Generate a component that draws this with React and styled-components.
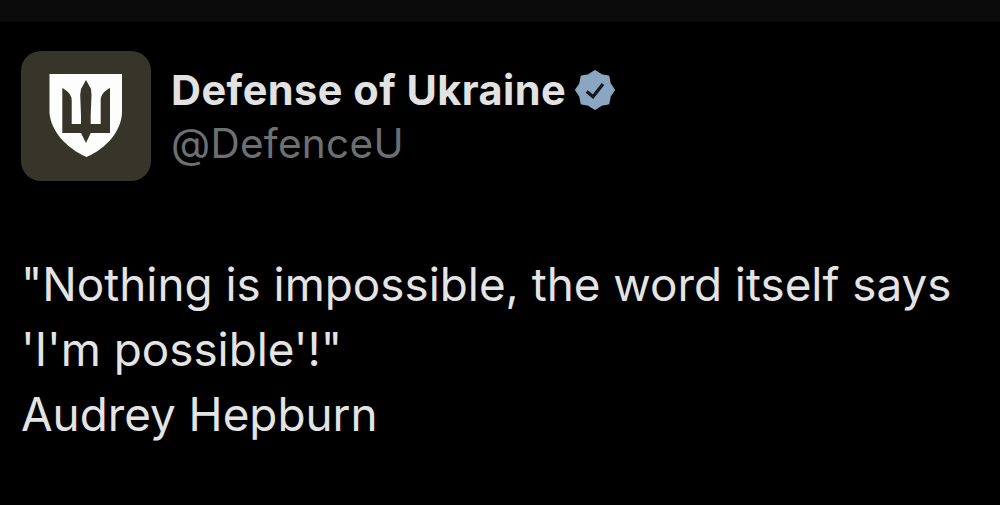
import React from "react";
import styled, { createGlobalStyle } from "styled-components";

const Global = createGlobalStyle`
html,body{margin:0;padding:0;background:#000;}
`;

const Page = styled.div`
width:1000px;
height:505px;
overflow:hidden;
background:#000;
font-family:Inter,"Liberation Sans",sans-serif;
`;

const TopBar = styled.div`
height:22px;
background:#0b0b0b;
`;

const Tweet = styled.div`
padding:29px 0 0 21px;
`;

const Header = styled.div`
display:flex;
align-items:flex-start;
gap:20px;
`;

const Avatar = styled.div`
width:130px;
height:130px;
border-radius:20px;
background:#37342a;
`;

const Names = styled.div`
display:flex;
flex-direction:column;
padding-top:13px;
`;

const NameRow = styled.div`
display:flex;
align-items:center;
gap:9px;
height:52px;
`;

const Name = styled.span`
font-size:41.5px;
font-weight:700;
letter-spacing:0.45px;
color:#e2e2e2;
`;

const Handle = styled.span`
margin-top:2px;
font-size:40.5px;
line-height:52px;
letter-spacing:0.3px;
color:#6d7073;
`;

const Body = styled.p`
margin:71px 0 0;
font-size:45.8px;
line-height:65px;
color:#e4e4e4;
white-space:pre-line;
`;

const Emblem = () => (
  <svg width="130" height="130" viewBox="0 0 130 130">
    <path fill="#fdfdfc" d="M28.5 23H101V62C100 80 86 97 65.5 106C45 97 30 80 28.5 62Z" />
    <path
      fill="#37342a"
      fillRule="evenodd"
      d="M65 29L70 38L70.5 44L69.7 64V73H79.7V49C79.7 43 85 39 89 37V82H69.7L65 92L60 82H41.3V37C45 39 50.7 43 50.7 49V73H60V64L59.2 44L60 38Z"
    />
  </svg>
);

const Verified = () => (
  <svg width="40" height="40" viewBox="0 0 40 40">
    <path
      fill="#8aa6c1"
      stroke="#8aa6c1"
      strokeWidth="2"
      strokeLinejoin="round"
      d="M20 1L26.3 5.2L33.4 6.6L34.8 13.7L39 20L34.8 26.3L33.4 33.4L26.3 34.8L20 39L13.7 34.8L6.6 33.4L5.2 26.3L1 20L5.2 13.7L6.6 6.6L13.7 5.2Z"
    />
    <path fill="none" stroke="#101820" strokeWidth="3.3" d="M11.7 21.5L18 26.7L28 14" />
  </svg>
);

export default function App() {
  return (
    <Page>
      <Global />
      <TopBar />
      <Tweet>
        <Header>
          <Avatar>
            <Emblem />
          </Avatar>
          <Names>
            <NameRow>
              <Name>Defense of Ukraine</Name>
              <Verified />
            </NameRow>
            <Handle>@DefenceU</Handle>
          </Names>
        </Header>
        <Body>{`"Nothing is impossible, the word itself says
'I'm possible'!"
Audrey Hepburn`}</Body>
      </Tweet>
    </Page>
  );
}
